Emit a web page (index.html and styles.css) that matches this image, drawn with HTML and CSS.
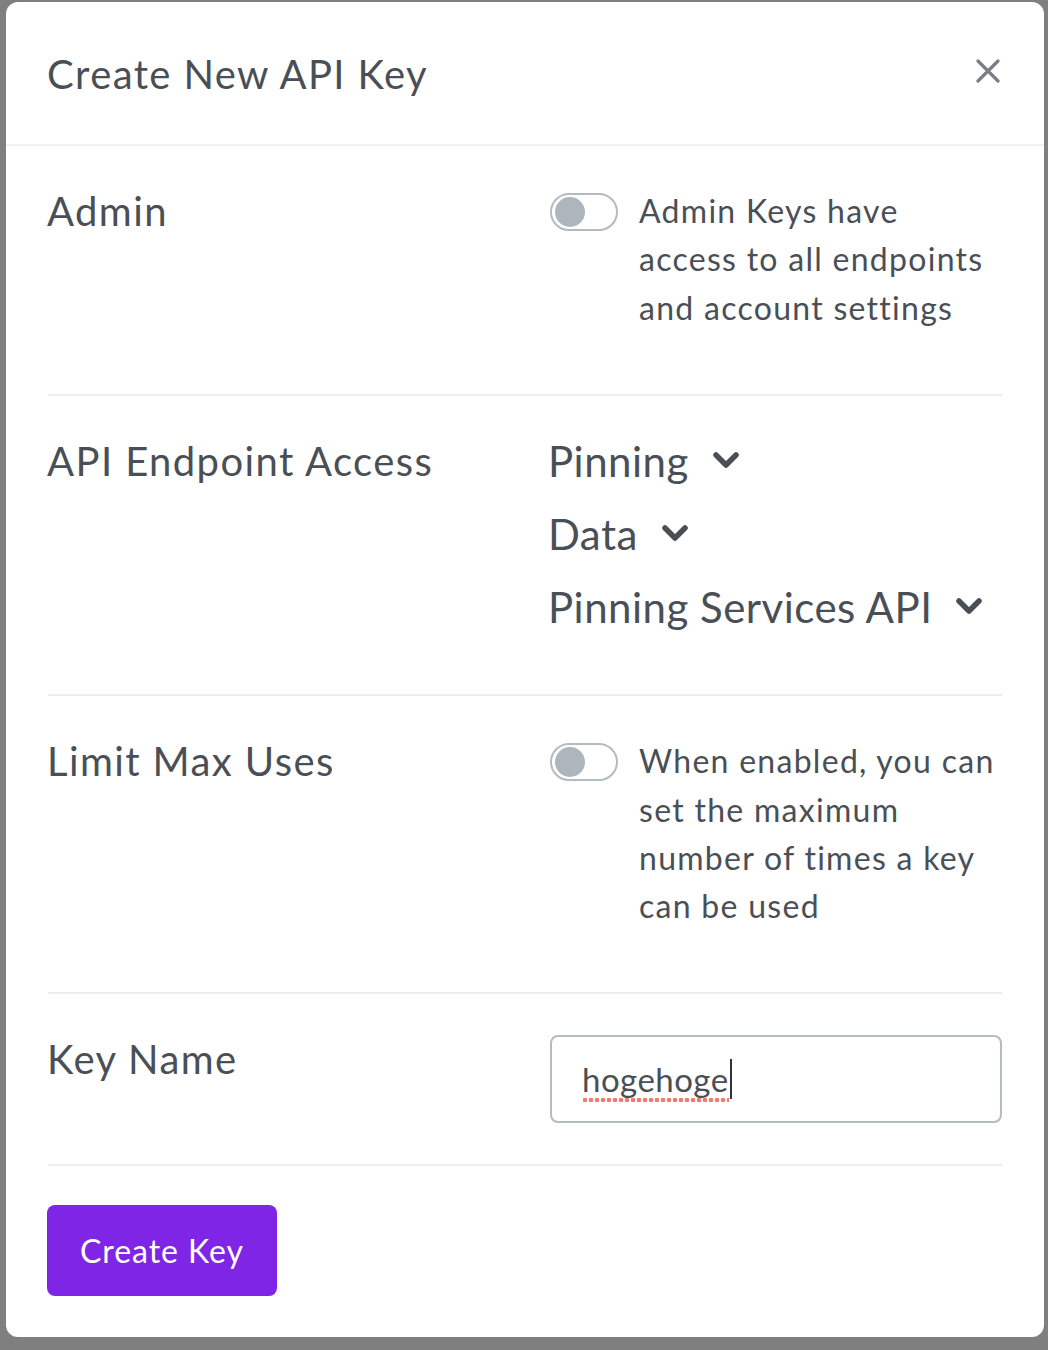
FILE: index.html
```html
<!DOCTYPE html>
<html lang="en">
<head>
<meta charset="utf-8">
<title>Create New API Key</title>
<link rel="stylesheet" href="styles.css">
</head>
<body>
<div class="overlay">
  <div class="modal">
    <div class="modal-header">
      <h2 class="modal-title">Create New API Key</h2>
      <button class="close" aria-label="Close">
        <svg width="24" height="24" viewBox="0 0 24 24"><path d="M2 2 L22 22 M22 2 L2 22" stroke="#7a7f85" stroke-width="3.2" stroke-linecap="round" fill="none"/></svg>
      </button>
    </div>
    <div class="modal-body">
      <div class="row">
        <div class="label">Admin</div>
        <div class="control">
          <div class="switch-line">
            <span class="switch"><span class="knob"></span></span>
            <p class="desc">Admin Keys have<br>access to all endpoints<br>and account settings</p>
          </div>
        </div>
      </div>
      <div class="row row-endpoints">
        <div class="label">API Endpoint Access</div>
        <div class="control">
          <ul class="groups">
            <li>Pinning <svg class="chev" viewBox="0 0 26 16"><path d="M3 3 L13 13 L23 3" stroke="#4a4f56" stroke-width="5.5" stroke-linecap="round" stroke-linejoin="round" fill="none"/></svg></li>
            <li>Data <svg class="chev" viewBox="0 0 26 16"><path d="M3 3 L13 13 L23 3" stroke="#4a4f56" stroke-width="5.5" stroke-linecap="round" stroke-linejoin="round" fill="none"/></svg></li>
            <li>Pinning Services API <svg class="chev" viewBox="0 0 26 16"><path d="M3 3 L13 13 L23 3" stroke="#4a4f56" stroke-width="5.5" stroke-linecap="round" stroke-linejoin="round" fill="none"/></svg></li>
          </ul>
        </div>
      </div>
      <div class="row row-limit">
        <div class="label">Limit Max Uses</div>
        <div class="control">
          <div class="switch-line">
            <span class="switch"><span class="knob"></span></span>
            <p class="desc">When enabled, you can<br>set the maximum<br>number of times a key<br>can be used</p>
          </div>
        </div>
      </div>
      <div class="row row-name">
        <div class="label">Key Name</div>
        <div class="control">
          <div class="field"><span class="typed">hogehoge</span><span class="caret"></span></div>
        </div>
      </div>
    </div>
    <div class="modal-footer">
      <button class="btn-primary">Create Key</button>
    </div>
  </div>
</div>
</body>
</html>
```
FILE: styles.css
```css
* { box-sizing: border-box; }
html, body {
  margin: 0;
  padding: 0;
  background: #7f7f7f;
}
body {
  font-family: "Lato", "Open Sans", sans-serif;
  color: #4a4f56;
  letter-spacing: 0.03em;
}
.overlay {
  padding: 2px 4px 0 6px;
  height: 1350px;
}
.modal {
  width: 1038px;
  height: 1335px;
  background: #fff;
  border-radius: 12px;
  display: flex;
  flex-direction: column;
}
.modal-header {
  height: 144px;
  padding: 0 42px;
  display: flex;
  align-items: center;
  justify-content: space-between;
  border-bottom: 2px solid #f1f0f5;
}
.modal-title {
  margin: 0 0 0 -1px;
  font-weight: 400;
  font-size: 40px;
  letter-spacing: 0.035em;
  color: #4a4f56;
  padding-top: 2px;
}
.close {
  background: none;
  border: 0;
  padding: 0;
  margin-right: 2px;
  width: 24px;
  height: 24px;
  display: flex;
  margin-top: -4px;
}
.modal-body {
  padding: 0 42px;
}
.row {
  display: grid;
  grid-template-columns: 502px 1fr;
  padding: 41px 0 62px;
  border-bottom: 2px solid #ececec;
}
.row-endpoints {
  padding-bottom: 63px;
}
.row-limit {
  padding-bottom: 61px;
}
.row-name {
  padding: 41px 0 41px;
}
.label {
  font-size: 40px;
  line-height: 48px;
  letter-spacing: 0.035em;
  margin-left: -1px;
}
.switch-line {
  display: flex;
  align-items: flex-start;
  gap: 22px;
}
.switch {
  flex: none;
  width: 68px;
  height: 38px;
  border: 2px solid #b3bac1;
  border-radius: 19px;
  margin-top: 6px;
  display: flex;
  align-items: center;
  padding-left: 3px;
}
.knob {
  width: 30px;
  height: 30px;
  border-radius: 50%;
  background: #adb5bd;
}
.desc {
  margin: 0 0 0 -1px;
  font-size: 32px;
  line-height: 48.4px;
  letter-spacing: 0.04em;
  white-space: nowrap;
}
.groups {
  list-style: none;
  margin: 0 0 0 -2px;
  padding: 0;
  display: flex;
  flex-direction: column;
  gap: 25px;
}
.groups li {
  font-size: 42px;
  line-height: 48px;
  display: flex;
  align-items: center;
}
.chev {
  width: 26px;
  height: 16px;
  margin-left: 24px;
  margin-top: -2px;
}
.field {
  height: 88px;
  border: 2px solid #b3bcc5;
  border-radius: 8px;
  padding: 0 30px;
  display: flex;
  align-items: center;
  font-size: 33px;
}
.typed {
  background-image: radial-gradient(circle, #ef7b70 2px, transparent 2.6px);
  background-size: 6px 6px;
  background-repeat: repeat-x;
  background-position: 0 100%;
  padding-bottom: 4px;
  margin-bottom: -4px;
}
.caret {
  width: 2px;
  height: 40px;
  background: #333;
  margin-left: 1px;
}
.modal-footer {
  padding: 39px 41px;
}
.btn-primary {
  background: #7f25e6;
  color: #fff;
  border: 0;
  border-radius: 8px;
  height: 91px;
  padding: 0 33px;
  font-family: "Lato", "Open Sans", sans-serif;
  font-size: 32px;
  letter-spacing: 0.03em;
}
```
